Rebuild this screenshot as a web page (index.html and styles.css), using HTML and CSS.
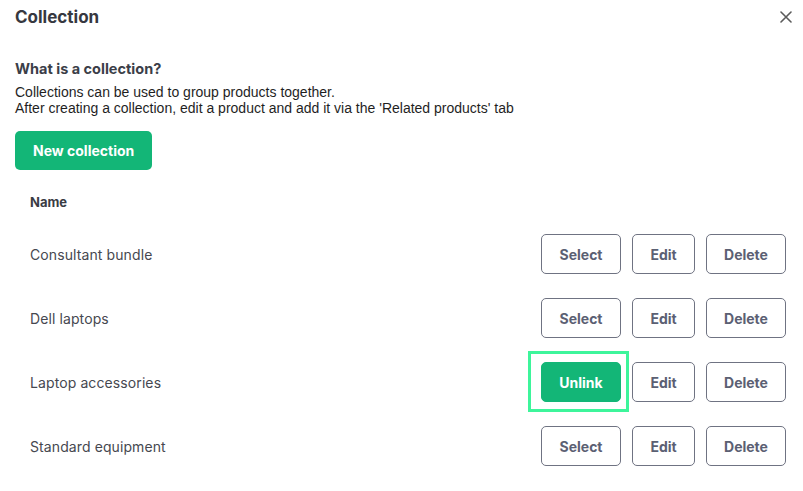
FILE: index.html
```html
<!DOCTYPE html>
<html>
<head>
<meta charset="utf-8">
<link rel="stylesheet" href="styles.css">
</head>
<body>
<div class="modal">
  <div class="header">
    <h1 class="title">Collection</h1>
    <button class="close" aria-label="Close">
      <svg width="12" height="12" viewBox="0 0 12 12"><path d="M1 1L11 11M11 1L1 11" stroke="#5b5b5b" stroke-width="1.6" stroke-linecap="round"/></svg>
    </button>
  </div>
  <h2 class="subtitle">What is a collection?</h2>
  <p class="desc">Collections can be used to group products together.<br>After creating a collection, edit a product and add it via the 'Related products' tab</p>
  <button class="btn-primary new">New collection</button>
  <div class="table">
    <div class="th">Name</div>
    <div class="row">
      <div class="name">Consultant bundle</div>
      <div class="actions">
        <button class="btn btn-sel">Select</button>
        <button class="btn btn-edit">Edit</button>
        <button class="btn btn-del">Delete</button>
      </div>
    </div>
    <div class="row">
      <div class="name">Dell laptops</div>
      <div class="actions">
        <button class="btn btn-sel">Select</button>
        <button class="btn btn-edit">Edit</button>
        <button class="btn btn-del">Delete</button>
      </div>
    </div>
    <div class="row">
      <div class="name">Laptop accessories</div>
      <div class="actions">
        <div class="focus-wrap"><button class="btn btn-sel btn-green">Unlink</button></div>
        <button class="btn btn-edit">Edit</button>
        <button class="btn btn-del">Delete</button>
      </div>
    </div>
    <div class="row">
      <div class="name">Standard equipment</div>
      <div class="actions">
        <button class="btn btn-sel">Select</button>
        <button class="btn btn-edit">Edit</button>
        <button class="btn btn-del">Delete</button>
      </div>
    </div>
  </div>
</div>
</body>
</html>
```
FILE: styles.css
```css
* { box-sizing: border-box; }
html, body { margin: 0; padding: 0; background: #fff; }
body { font-family: Inter, "Liberation Sans", sans-serif; }
.modal { padding: 7px 17px 0 15px; width: 803px; }
.header { display: flex; justify-content: space-between; align-items: center; height: 20px; }
.title { margin: 0; font-size: 17px; font-weight: 700; color: #363840; line-height: 20px; }
.close { border: 0; background: none; padding: 0; width: 12px; height: 12px; display: flex; margin-right: -6px; }
.subtitle { margin: 34px 0 0; font-size: 14.5px; font-weight: 700; color: #3b3e48; line-height: 16px; }
.desc { margin: 7px 0 0; font-family: "Liberation Sans", Arial, sans-serif; font-size: 14px; line-height: 16px; color: #1f1f1f; }
.btn-primary { display: block; margin-top: 15px; height: 39px; padding: 0 18px; border: 0; border-radius: 5px; background: #13b677; color: #fff; font-family: Inter, sans-serif; font-weight: 700; font-size: 14px; white-space: nowrap; }
.new { width: 137px; }
.table { padding: 0 0 0 15px; margin-top: 20px; }
.th { font-size: 13px; font-weight: 700; color: #3a3c44; line-height: 16px; height: 32px; padding-top: 4px; }
.row { display: flex; justify-content: space-between; align-items: center; height: 64px; }
.name { font-size: 14px; color: #464850; letter-spacing: 0.1px; }
.actions { display: flex; gap: 11px; align-items: center; }
.btn { height: 40px; border: 1px solid #6f7382; border-radius: 5px; background: #fff; color: #5b6073; font-family: Inter, sans-serif; font-weight: 700; font-size: 14px; padding: 0; }
.btn-sel, .btn-del { width: 80px; }
.btn-edit { width: 63px; }
.btn-green { background: #13b677; border-color: #13b677; color: #fff; }
.focus-wrap { display: flex; padding: 8px 5px 7px 10px; margin: -8px -5px -7px -10px; outline: 3px solid #3df59b; }
```
